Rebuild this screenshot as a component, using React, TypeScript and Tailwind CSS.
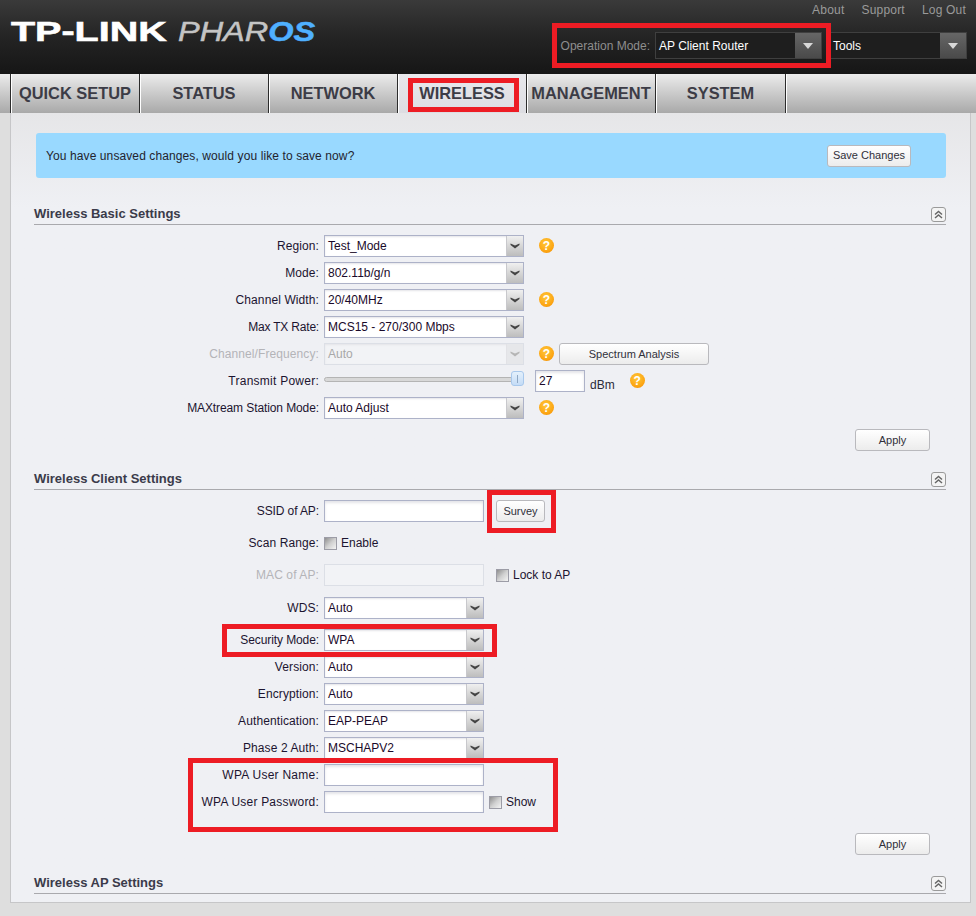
import React from "react";

const font = "font-['Liberation_Sans',Arial,sans-serif]";

function Help() {
  return (
    <span className="mb-[1px] flex h-[15px] w-[15px] shrink-0 items-center justify-center rounded-full bg-[radial-gradient(circle_at_45%_35%,#ffc83a,#fca412_65%,#ea8400)] text-[12px] font-bold leading-none text-white">
      ?
    </span>
  );
}

function Select({ value, w, disabled }: { value: string; w: string; disabled?: boolean }) {
  return (
    <div
      className={`flex h-[22px] ${w} items-stretch border ${
        disabled ? "border-[#dcdfe6] bg-[#f2f3f6] text-[#a8a8a8]" : "border-[#adb2c8] bg-white text-[#1a0a2a]"
      } shadow-[inset_0_1px_2px_#e4e4e8]`}
    >
      <span className="flex-1 pl-[3px] pt-[3px] text-[12px] leading-[15px]">{value}</span>
      <span
        className={`flex w-[17px] items-center justify-center border-l ${
          disabled ? "border-[#e2e2e6] bg-[#e6e7ea]" : "border-[#c8c8cc] bg-gradient-to-b from-[#f0f0f0] to-[#bdbdbd]"
        }`}
      >
        <svg width="10" height="6" viewBox="0 0 10 6">
          <path d="M0.5 0.5 L5 2.5 L9.5 0.5 L9.5 2 L5 5.5 L0.5 2 Z" fill={disabled ? "#b5b5b5" : "#444"} />
        </svg>
      </span>
    </div>
  );
}

function Input({ w, value, disabled }: { w: string; value?: string; disabled?: boolean }) {
  return (
    <div
      className={`h-[22px] ${w} border pl-[3px] pt-[3px] text-[12px] leading-[15px] text-[#1a0a2a] ${
        disabled
          ? "border-[#dcdfe6] bg-[#f2f3f6]"
          : "border-[#adb2c8] bg-white shadow-[inset_0_2px_3px_#e4e4e8]"
      }`}
    >
      {value}
    </div>
  );
}

function Row({
  label,
  children,
  disabled,
  mt = "mt-[5px]",
  tr = "tracking-[0.1px]",
}: {
  label: string;
  children?: React.ReactNode;
  disabled?: boolean;
  mt?: string;
  tr?: string;
}) {
  return (
    <div className={`flex h-[22px] items-center ${mt}`}>
      <span
        className={`w-[285px] shrink-0 text-right text-[12px] leading-[14px] ${tr} ${
          disabled ? "text-[#b4b4b8]" : "text-[#1c1430]"
        }`}
      >
        {label}
      </span>
      <div className="ml-[5px] flex items-center">{children}</div>
    </div>
  );
}

function Button({ children, className }: { children: React.ReactNode; className: string }) {
  return (
    <div
      className={`flex h-[22px] items-center justify-center rounded-[3px] border border-[#b9b9bd] bg-gradient-to-b from-white to-[#ececec] text-[11px] text-[#30303a] ${className}`}
    >
      {children}
    </div>
  );
}

function Check({ label }: { label: string }) {
  return (
    <span className="flex items-center text-[12px] text-[#1c1430]">
      <span className="h-[13px] w-[13px] border border-[#9c9ca6] bg-gradient-to-br from-[#8f8f8f] via-[#d0d0d0] to-[#f4f4f4]" />
      <span className="ml-[4px]">{label}</span>
    </span>
  );
}

function SectionHead({ title, className }: { title: string; className: string }) {
  return (
    <div className={`flex h-[20px] items-end justify-between border-b border-[#a9a9ad] ${className}`}>
      <span className="pb-[3px] text-[13px] font-bold leading-[15px] text-[#3b3b4a]">{title}</span>
      <span className="mb-[2px] flex h-[15px] w-[15px] items-center justify-center rounded-[3px] border border-[#9a9a9a] bg-[#f4f4f4]">
        <svg width="9" height="9" viewBox="0 0 9 9" fill="none" stroke="#666" strokeWidth="1.5">
          <path d="M1 4.5 L4.5 1.5 L8 4.5" />
          <path d="M1 8 L4.5 5 L8 8" />
        </svg>
      </span>
    </div>
  );
}

function ApplyRow({ className }: { className: string }) {
  return (
    <div className={`flex justify-end pr-[16px] ${className}`}>
      <Button className="w-[75px]">Apply</Button>
    </div>
  );
}

function DarkSelect({ value, className }: { value: string; className: string }) {
  return (
    <div className={`flex h-[27px] items-stretch border border-[#3f3f3f] bg-[#1e1e1e] ${className}`}>
      <span className="flex-1 pl-[3px] pt-[6px] text-[12px] leading-[14px] text-white">{value}</span>
      <span className="flex w-[26px] items-center justify-center bg-gradient-to-b from-[#666666] to-[#4a4a4a]">
        <span className="h-0 w-0 border-x-[5px] border-t-[6px] border-x-transparent border-t-[#d8d8d8]" />
      </span>
    </div>
  );
}

function NavItem({ children, w = "w-[129px]", active }: { children: string; w?: string; active?: boolean }) {
  return (
    <div
      className={`flex h-full ${w} items-center justify-center border-l border-l-white border-r border-r-[#2c2c2c] pr-[1px] text-[16.4px] font-bold text-[#3c3c46] ${
        active ? "bg-gradient-to-b from-[#e8e8ec] to-[#dddde2]" : ""
      }`}
    >
      {children}
    </div>
  );
}

function Red({ className }: { className: string }) {
  return <div className={`pointer-events-none absolute border-[5px] border-[#ed1c24] ${className}`} />;
}

export default function App() {
  return (
    <div className={`relative h-[916px] w-[976px] overflow-hidden bg-[#dedede] ${font}`}>
      {/* Header */}
      <header className="flex h-[74px] justify-between bg-gradient-to-b from-[#3a3a3a] via-[#242424] to-[#161616]">
        <div className="flex pl-[11px] pt-[16px] leading-[32px]">
          <span className="inline-block w-[167px] origin-left scale-x-[1.41] text-[28px] font-bold text-white [-webkit-text-stroke:0.6px_white]">
            TP-LINK
          </span>
          <span className="inline-block origin-left scale-x-[1.16] text-[28px] italic text-[#c4c4c4] [-webkit-text-stroke:0.5px_#c4c4c4]">
            PHAR<span className="font-bold text-[#4fb0ff] [-webkit-text-stroke:0.5px_#4fb0ff]">OS</span>
          </span>
        </div>
        <div className="flex flex-col items-end pr-[9px]">
          <div className="flex gap-[17px] pr-[1px] pt-[3px] text-[12px] leading-[15px] tracking-[0.2px] text-[#9a9a9a]">
            <span>About</span>
            <span>Support</span>
            <span>Log Out</span>
          </div>
          <div className="mt-[14px] flex items-center">
            <span className="mr-[5px] text-[12px] text-[#8e8e8e]">Operation Mode:</span>
            <DarkSelect value="AP Client Router" className="w-[167px]" />
            <DarkSelect value="Tools" className="ml-[5px] w-[140px] pl-[2px]" />
          </div>
        </div>
      </header>

      {/* Nav */}
      <nav className="flex h-[39px] bg-gradient-to-b from-[#ececec] to-[#a9a9a9] pl-[10px]">
        <div className="h-full w-px bg-[#2c2c2c]" />
        <NavItem>QUICK SETUP</NavItem>
        <NavItem>STATUS</NavItem>
        <NavItem>NETWORK</NavItem>
        <NavItem active>WIRELESS</NavItem>
        <NavItem>MANAGEMENT</NavItem>
        <NavItem w="w-[130px]">SYSTEM</NavItem>
        <div className="h-full w-px bg-white" />
      </nav>

      {/* Content panel */}
      <main className="ml-[10px] mr-[5px] h-[790px] border-x border-b border-[#c6c6c8] bg-gradient-to-b from-[#e6e6e8] via-[#eff0f4] via-[12%] to-[#eff0f4] pl-[23px] pr-[24px] pt-[20px]">
        <div className="ml-[2px] flex h-[45px] items-center justify-between rounded-[3px] bg-[#99d9ff] pl-[10px] pr-[35px] text-[12px] tracking-[0.1px] text-[#23232e]">
          <span>You have unsaved changes, would you like to save now?</span>
          <Button className="w-[84px] tracking-normal text-[#30303a]">Save Changes</Button>
        </div>

        <SectionHead title="Wireless Basic Settings" className="mt-[27px]" />
        <Row label="Region:" mt="mt-[10px]">
          <Select value="Test_Mode" w="w-[200px]" />
          <span className="ml-[15px]"><Help /></span>
        </Row>
        <Row label="Mode:">
          <Select value="802.11b/g/n" w="w-[200px]" />
        </Row>
        <Row label="Channel Width:">
          <Select value="20/40MHz" w="w-[200px]" />
          <span className="ml-[15px]"><Help /></span>
        </Row>
        <Row label="Max TX Rate:" tr="tracking-[-0.2px]">
          <Select value="MCS15 - 270/300 Mbps" w="w-[200px]" />
        </Row>
        <Row label="Channel/Frequency:" disabled>
          <Select value="Auto" w="w-[200px]" disabled />
          <span className="ml-[15px]"><Help /></span>
          <Button className="ml-[5px] w-[150px]">Spectrum Analysis</Button>
        </Row>
        <Row label="Transmit Power:" tr="tracking-[0.25px]">
          <div className="relative mb-[4px] h-[16px] w-[200px]">
            <div className="absolute left-0 right-[6px] top-[6px] h-[5px] rounded-[3px] border border-[#b4b4b4] bg-[#d8d8d8]" />
            <div className="absolute right-0 top-0 h-[15px] w-[13px] rounded-[3px] border border-[#a8c8ec] bg-gradient-to-b from-[#e4f0fc] to-[#c4dcf6]">
              <div className="mx-auto mt-[3px] h-[8px] w-px bg-[#8fa8c4]" />
            </div>
          </div>
          <div className="ml-[11px]"><Input w="w-[50px]" value="27" /></div>
          <span className="ml-[5px] mt-[7px] text-[12px] text-[#2a2a38]">dBm</span>
          <span className="ml-[15px]"><Help /></span>
        </Row>
        <Row label="MAXtream Station Mode:" tr="tracking-[-0.1px]">
          <Select value="Auto Adjust" w="w-[200px]" />
          <span className="ml-[15px]"><Help /></span>
        </Row>
        <ApplyRow className="mt-[10px]" />

        <SectionHead title="Wireless Client Settings" className="mt-[19px]" />
        <Row label="SSID of AP:" mt="mt-[10px]" tr="tracking-[-0.1px]">
          <Input w="w-[160px]" />
          <Button className="ml-[12px] w-[49px]">Survey</Button>
        </Row>
        <Row label="Scan Range:" mt="mt-[10px]">
          <Check label="Enable" />
        </Row>
        <Row label="MAC of AP:" mt="mt-[10px]" disabled>
          <Input w="w-[160px]" disabled />
          <span className="ml-[12px]"><Check label="Lock to AP" /></span>
        </Row>
        <Row label="WDS:" mt="mt-[11px]">
          <Select value="Auto" w="w-[160px]" />
        </Row>
        <Row label="Security Mode:" mt="mt-[10px]" tr="tracking-[-0.1px]">
          <Select value="WPA" w="w-[160px]" />
        </Row>
        <Row label="Version:">
          <Select value="Auto" w="w-[160px]" />
        </Row>
        <Row label="Encryption:">
          <Select value="Auto" w="w-[160px]" />
        </Row>
        <Row label="Authentication:">
          <Select value="EAP-PEAP" w="w-[160px]" />
        </Row>
        <Row label="Phase 2 Auth:">
          <Select value="MSCHAPV2" w="w-[160px]" />
        </Row>
        <Row label="WPA User Name:" tr="tracking-[0.25px]">
          <Input w="w-[160px]" />
        </Row>
        <Row label="WPA User Password:" tr="tracking-[0.2px]">
          <Input w="w-[160px]" />
          <span className="ml-[5px]"><Check label="Show" /></span>
        </Row>
        <ApplyRow className="mt-[20px]" />

        <SectionHead title="Wireless AP Settings" className="mt-[19px]" />
      </main>

      {/* Annotation boxes */}
      <Red className="left-[552px] top-[23px] h-[45px] w-[279px]" />
      <Red className="left-[408px] top-[78px] h-[34px] w-[111px]" />
      <Red className="left-[487px] top-[490px] h-[43px] w-[69px]" />
      <Red className="left-[222px] top-[624px] h-[33px] w-[275px]" />
      <Red className="left-[188px] top-[758px] h-[74px] w-[370px]" />
    </div>
  );
}
